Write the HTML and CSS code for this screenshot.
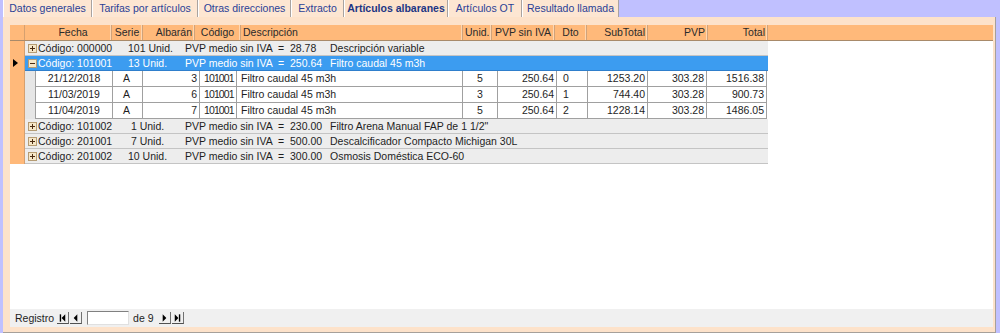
FILE: index.html
```html
<!DOCTYPE html>
<html lang="es">
<head>
  <meta charset="UTF-8">
  <title>Artículos albaranes</title>
  <link rel="stylesheet" href="styles.css">
</head>
<body>
  <!-- Pestañas -->
  <div class="tabs">
    <div class="tab t1">Datos generales</div>
    <div class="tab t2">Tarifas por artículos</div>
    <div class="tab t3">Otras direcciones</div>
    <div class="tab t4">Extracto</div>
    <div class="tab t5 active">Artículos albaranes</div>
    <div class="tab t6">Artículos OT</div>
    <div class="tab t7">Resultado llamada</div>
  </div>

  <div class="panel">
    <div class="sheet">
      <div class="row head">
        <div class="sel"></div>
        <div class="hc h-fecha center">Fecha</div>
        <div class="hc h-serie center">Serie</div>
        <div class="hc h-alb right">Albarán</div>
        <div class="hc h-cod center">Código</div>
        <div class="hc h-desc">Descripción</div>
        <div class="hc h-unid center">Unid.</div>
        <div class="hc h-pvps center">PVP sin IVA</div>
        <div class="hc h-dto center">Dto</div>
        <div class="hc h-sub right">SubTotal</div>
        <div class="hc h-pvp right">PVP</div>
        <div class="hc h-total right">Total</div>
        <div class="hc h-rest"></div>
      </div>

      <div class="row group">
        <div class="sel"></div>
        <div class="gbody"><span class="tog plus"></span><span class="g-code">Código: 000000</span><span class="g-unid">101 Unid.</span><span class="g-pvp">PVP medio sin IVA  =  28.78</span><span>Descripción variable</span></div>
      </div>

      <div class="row group current">
        <div class="sel"><span class="arrow"></span></div>
        <div class="gbody"><span class="tog minus"></span><span class="g-code">Código: 101001</span><span class="g-unid">13 Unid.</span><span class="g-pvp">PVP medio sin IVA  =  250.64</span><span>Filtro caudal 45 m3h</span></div>
      </div>

      <div class="row detail">
        <div class="sel"></div>
        <div class="gutter"></div>
        <div class="dc d-fecha center">21/12/2018</div>
        <div class="dc d-serie">A</div>
        <div class="dc d-alb right">3</div>
        <div class="dc d-cod">101001</div>
        <div class="dc d-desc">Filtro caudal 45 m3h</div>
        <div class="dc d-unid center">5</div>
        <div class="dc d-pvps right">250.64</div>
        <div class="dc d-dto">0</div>
        <div class="dc d-sub right">1253.20</div>
        <div class="dc d-pvp right">303.28</div>
        <div class="dc d-total right">1516.38</div>
      </div>
      <div class="row detail">
        <div class="sel"></div>
        <div class="gutter"></div>
        <div class="dc d-fecha center">11/03/2019</div>
        <div class="dc d-serie">A</div>
        <div class="dc d-alb right">6</div>
        <div class="dc d-cod">101001</div>
        <div class="dc d-desc">Filtro caudal 45 m3h</div>
        <div class="dc d-unid center">3</div>
        <div class="dc d-pvps right">250.64</div>
        <div class="dc d-dto">1</div>
        <div class="dc d-sub right">744.40</div>
        <div class="dc d-pvp right">303.28</div>
        <div class="dc d-total right">900.73</div>
      </div>
      <div class="row detail">
        <div class="sel"></div>
        <div class="gutter"></div>
        <div class="dc d-fecha center">11/04/2019</div>
        <div class="dc d-serie">A</div>
        <div class="dc d-alb right">7</div>
        <div class="dc d-cod">101001</div>
        <div class="dc d-desc">Filtro caudal 45 m3h</div>
        <div class="dc d-unid center">5</div>
        <div class="dc d-pvps right">250.64</div>
        <div class="dc d-dto">2</div>
        <div class="dc d-sub right">1228.14</div>
        <div class="dc d-pvp right">303.28</div>
        <div class="dc d-total right">1486.05</div>
      </div>

      <div class="row group">
        <div class="sel"></div>
        <div class="gbody"><span class="tog plus"></span><span class="g-code">Código: 101002</span><span class="g-unid"> 1 Unid.</span><span class="g-pvp">PVP medio sin IVA  =  230.00</span><span>Filtro Arena Manual FAP de 1 1/2"</span></div>
      </div>
      <div class="row group">
        <div class="sel"></div>
        <div class="gbody"><span class="tog plus"></span><span class="g-code">Código: 201001</span><span class="g-unid"> 7 Unid.</span><span class="g-pvp">PVP medio sin IVA  =  500.00</span><span>Descalcificador Compacto Michigan 30L</span></div>
      </div>
      <div class="row group">
        <div class="sel"></div>
        <div class="gbody"><span class="tog plus"></span><span class="g-code">Código: 201002</span><span class="g-unid">10 Unid.</span><span class="g-pvp">PVP medio sin IVA  =  300.00</span><span>Osmosis Doméstica ECO-60</span></div>
      </div>
    </div>

    <!-- Navegación de registros -->
    <div class="nav">
      <span class="nav-label">Registro</span>
      <span class="nbtn">
        <svg width="12" height="8" viewBox="0 0 12 8"><rect x="3" y="0" width="1.5" height="8" fill="#000"/><path d="M9 0 L5 4 L9 8 Z" fill="#000"/></svg>
      </span>
      <span class="nbtn">
        <svg width="12" height="8" viewBox="0 0 12 8"><path d="M8 0 L4 4 L8 8 Z" fill="#000"/></svg>
      </span>
      <span class="nav-input"></span>
      <span class="nav-of">de 9</span>
      <span class="nbtn">
        <svg width="12" height="8" viewBox="0 0 12 8"><path d="M4 0 L8 4 L4 8 Z" fill="#000"/></svg>
      </span>
      <span class="nbtn">
        <svg width="12" height="8" viewBox="0 0 12 8"><path d="M3 0 L7 4 L3 8 Z" fill="#000"/><rect x="7.5" y="0" width="1.5" height="8" fill="#000"/></svg>
      </span>
    </div>
  </div>
</body>
</html>
```

FILE: styles.css
```css
body {
  margin: 0;
  background: #c0c0ff;
  font-family: 'Liberation Sans', Arial, sans-serif;
  font-size: 10.5px;
  color: #1e1e1e;
  height: 333px;
  overflow: hidden;
}
.tabs {
  display: flex;
  height: 17px;
  margin-left: 3px;
}
.tab {
  background: #fde6d2;
  color: #2a3f96;
  line-height: 16px;
  text-align: center;
  box-sizing: border-box;
  border-right: 1px solid #a9a3a0;
  border-left: 1px solid #ffffff;
  white-space: nowrap;
}
.t1 { width: 89px; }
.t2 { width: 106px; }
.t3 { width: 93px; }
.t4 { width: 53px; }
.t5 { width: 104px; }
.t6 { width: 74px; }
.t7 { width: 97px; }
.tab.active {
  background: #fde2ca;
  font-weight: bold;
  color: #1c3584;
}
.panel {
  margin-left: 3px;
  width: 993px;
  height: 316px;
  box-sizing: border-box;
  background: #fde2ca;
  padding: 8px 3px 0 7px;
  border-right: 1px solid #a6a09a;
  border-bottom: 1px solid #a6a09a;
}
.sheet {
  background: #ffffff;
  width: 983px;
  height: 284px;
}
.row {
  display: flex;
  height: 15px;
  line-height: 14px;
  white-space: pre;
}
.sel {
  width: 15px;
  flex: none;
  box-sizing: border-box;
  background: #ffb97a;
  border-right: 1px solid #d5a070;
  position: relative;
}
.arrow {
  position: absolute;
  left: 3px;
  top: 3px;
  width: 0;
  height: 0;
  border-top: 4px solid transparent;
  border-bottom: 4px solid transparent;
  border-left: 5px solid #000;
}

/* cabecera */
.row.head {
  height: 16px;
  line-height: 15px;
  background: #ffb97a;
  border-bottom: 1px solid #a88a6a;
  box-sizing: border-box;
}
.hc {
  flex: none;
  box-sizing: border-box;
  border-right: 1px solid #cfa27a;
  box-shadow: inset -1px 0 0 #ffd6b0;
  padding: 0 2px;
  color: #2a2a2a;
}
.h-fecha { width: 87px; padding-left: 12px; }
.h-serie { width: 31px; }
.h-alb { width: 52px; }
.h-cod { width: 46px; }
.h-desc { width: 222px; }
.h-unid { width: 29px; }
.h-pvps { width: 63px; }
.h-dto { width: 32px; }
.h-sub { width: 61px; }
.h-pvp { width: 60px; }
.h-total { width: 60px; }
.h-rest { flex: 1; border-right: none; box-shadow: none; }
.center { text-align: center; }
.right { text-align: right; }

/* filas de grupo */
.gbody {
  width: 743px;
  box-sizing: border-box;
  background: #ededed;
  border-bottom: 1px solid #c4c4c4;
  display: flex;
  align-items: center;
}
.current .gbody {
  background: #3c9cf0;
  color: #ffffff;
  border-bottom-color: #2f7fcc;
}
.tog {
  width: 9px;
  height: 9px;
  box-sizing: border-box;
  margin: 0 1px 0 3px;
  background: #f6e7c8;
  border: 1px solid #b59c74;
  position: relative;
}
.tog::before {
  content: "";
  position: absolute;
  left: 1px;
  top: 3px;
  width: 5px;
  height: 1px;
  background: #4a2a10;
}
.tog.plus::after {
  content: "";
  position: absolute;
  left: 3px;
  top: 1px;
  width: 1px;
  height: 5px;
  background: #4a2a10;
}
.g-code { width: 90px; }
.g-unid { width: 57px; }
.g-pvp { width: 145px; }

/* filas de detalle */
.row.detail { height: 16px; line-height: 15px; }
.gutter {
  width: 11px;
  flex: none;
  box-sizing: border-box;
  background: #e6e6e6;
  border-right: 1px solid #a0a0a0;
}
.dc {
  flex: none;
  box-sizing: border-box;
  border-right: 1px solid #a0a0a0;
  border-bottom: 1px solid #a0a0a0;
  padding: 0 2px;
  overflow: hidden;
}
.d-fecha { width: 77px; }
.d-serie { width: 30px; padding-left: 10px; }
.d-alb { width: 57px; }
.d-cod { width: 37px; padding-left: 4px; letter-spacing: -0.9px; }
.d-desc { width: 226px; padding-left: 4px; }
.d-unid { width: 35px; }
.d-pvps { width: 59px; }
.d-dto { width: 31px; padding-left: 6px; }
.d-sub { width: 60px; }
.d-pvp { width: 59px; }
.d-total { width: 60px; }

/* navegación */
.nav {
  display: flex;
  align-items: center;
  width: 983px;
  height: 18px;
  background: #f0f0f0;
  padding-left: 5px;
  box-sizing: border-box;
}
.nav-label { margin-right: 3px; }
.nbtn {
  width: 12px;
  height: 12px;
  box-sizing: border-box;
  border-bottom: 1px solid #505050;
  border-right: 1px solid #707070;
  display: flex;
  align-items: center;
  justify-content: center;
  margin-right: 1px;
}
.nav-input {
  width: 42px;
  height: 14px;
  box-sizing: border-box;
  background: #ffffff;
  border-top: 1px solid #808080;
  border-left: 1px solid #808080;
  border-bottom: 1px solid #e0e0e0;
  border-right: 1px solid #e0e0e0;
  margin: 0 4px 0 4px;
}
.nav-of { margin-right: 5px; }
```
